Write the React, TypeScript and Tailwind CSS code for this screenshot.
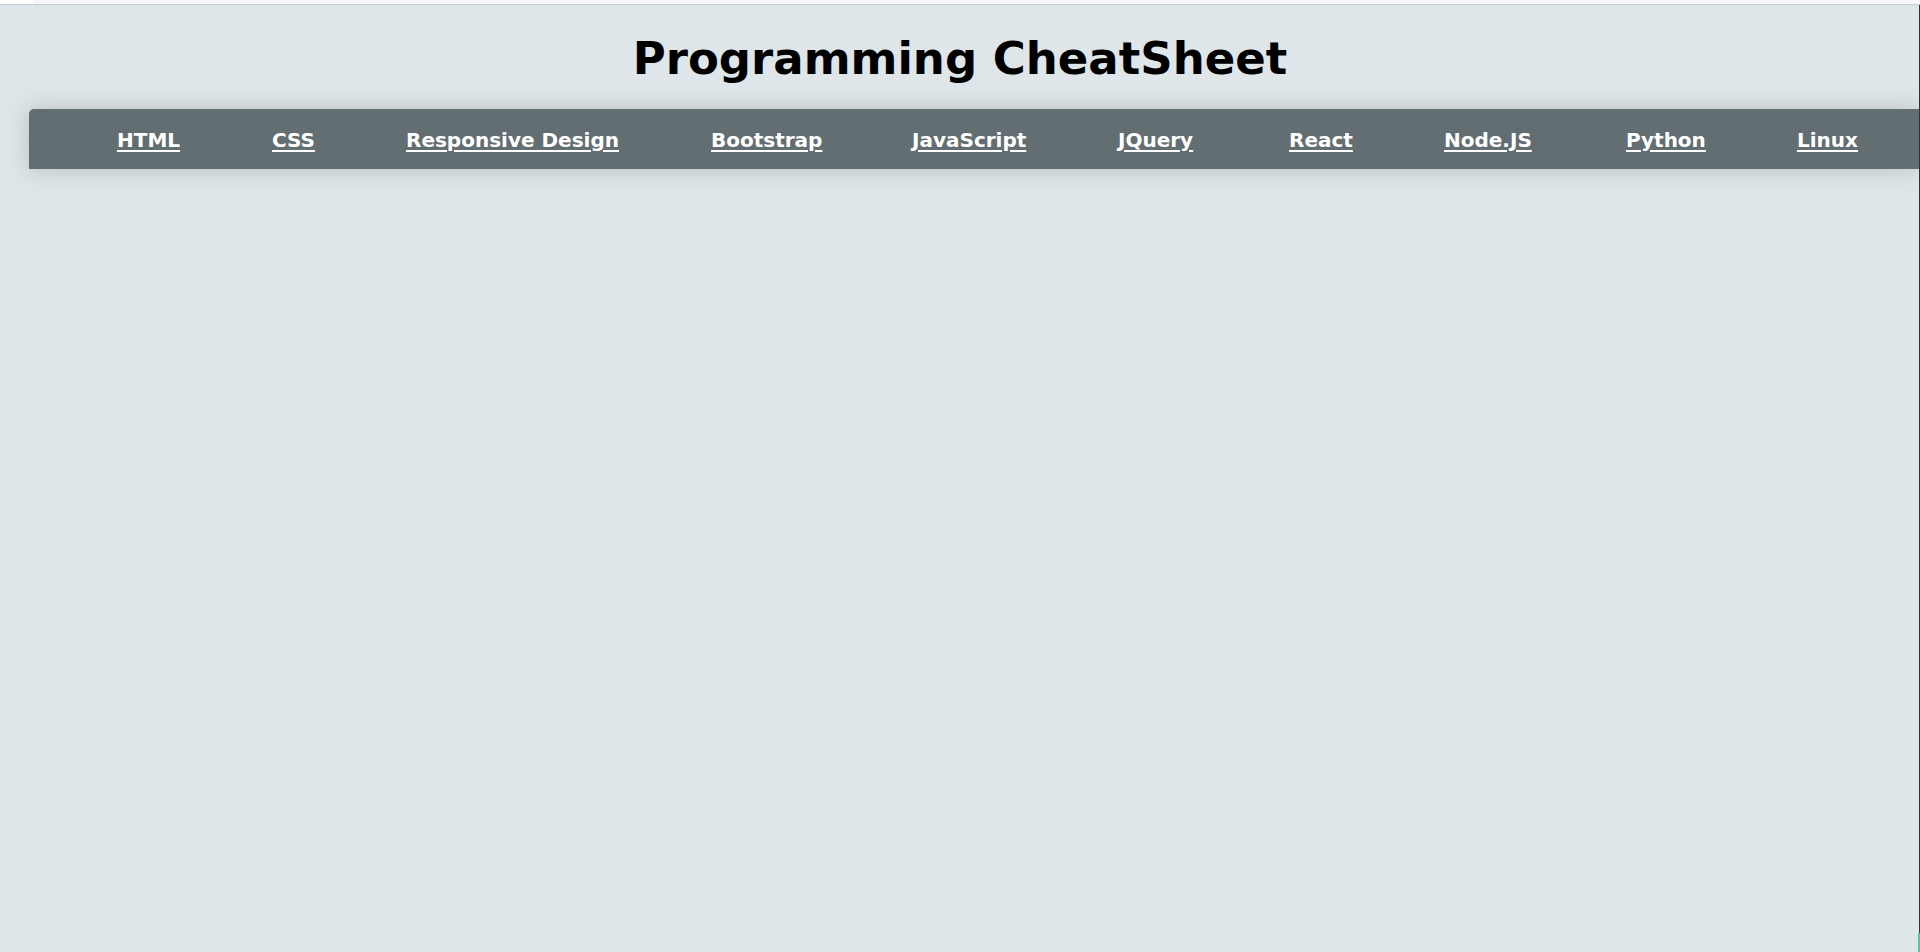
import React from "react";

const links: { label: string; w: string }[] = [
  { label: "HTML", w: "w-[64px]" },
  { label: "CSS", w: "w-[43px]" },
  { label: "Responsive Design", w: "w-[214px]" },
  { label: "Bootstrap", w: "w-[110px]" },
  { label: "JavaScript", w: "w-[115px]" },
  { label: "JQuery", w: "w-[80px]" },
  { label: "React", w: "w-[64px]" },
  { label: "Node.JS", w: "w-[91px]" },
  { label: "Python", w: "w-[80px]" },
  { label: "Linux", w: "w-[62px]" },
];

export default function App() {
  return (
    <div
      className="relative min-h-screen w-full overflow-hidden bg-[#dfe6e9]"
      style={{ fontFamily: '"DejaVu Sans", "Liberation Sans", sans-serif' }}
    >
      <div className="flex h-[5px] border-b border-[#c9cbcc] bg-[#f6f7f8]">
        <div className="w-[33px] bg-white" />
      </div>

      <h1 className="mt-[28px] text-center text-[45px] font-bold leading-[52px] text-black">
        Programming CheatSheet
      </h1>

      <nav className="ml-[29px] mt-[24px] flex h-[60px] items-center rounded-tl-[5px] bg-[#636e72] pl-[88px] pt-[1px] shadow-[0_0_25px_rgba(0,0,0,0.18)]">
        <ul className="flex items-center gap-[91px]">
          {links.map((l) => (
            <li key={l.label} className={`${l.w} shrink-0 whitespace-nowrap`}>
              <a
                href="#"
                className="text-[20px] font-bold text-white underline decoration-[2px] underline-offset-[3px]"
              >
                {l.label}
              </a>
            </li>
          ))}
        </ul>
      </nav>

      <div className="absolute right-0 top-[5px] bottom-0 w-[1px] bg-[#2d3436]" />
      <div className="absolute right-0 bottom-0 h-[19px] w-[2px] bg-[#4fc9a4]" />
    </div>
  );
}
